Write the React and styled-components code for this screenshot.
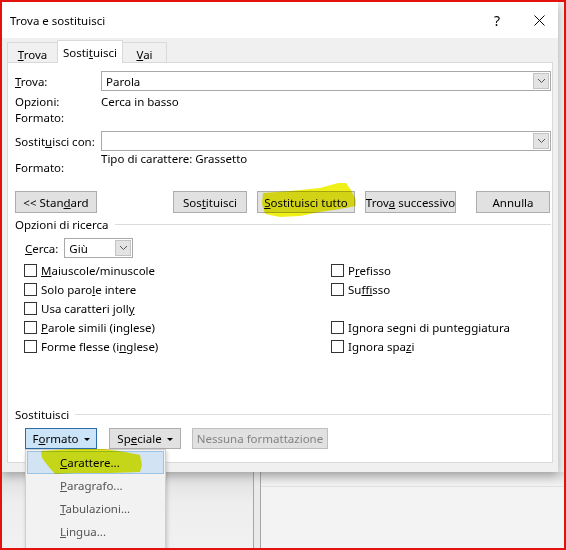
import styled, { createGlobalStyle } from "styled-components";

const GlobalStyle = createGlobalStyle`
  body {
    margin: 0;
    font-family: "Noto Sans", "Liberation Sans", sans-serif;
    font-size: 11.5px;
    color: #000;
  }
`;

const Frame = styled.div`
  width: 566px;
  height: 550px;
  box-sizing: border-box;
  border: 2px solid #e3120c;
  background: #f3f3f3;
  position: relative;
  overflow: hidden;
  display: flex;
  flex-direction: column;
`;

const Dialog = styled.div`
  width: 556px;
  height: 470px;
  flex: none;
  display: flex;
  flex-direction: column;
  background: #f0f0f0;
  box-shadow: 0 3px 10px rgba(0, 0, 0, 0.3);
  position: relative;
  z-index: 1;
`;

const TitleBar = styled.div`
  height: 36px;
  flex: none;
  display: flex;
  align-items: center;
  background: #fff;
  padding-left: 8px;
`;

const Title = styled.div`
  flex: 1;
  font-size: 11.5px;
`;

const TitleButton = styled.div`
  width: ${(p) => p.$w}px;
  height: 36px;
  display: flex;
  align-items: center;
  justify-content: center;
  font-size: 14px;
`;

const Body = styled.div`
  flex: 1;
  display: flex;
  flex-direction: column;
  padding: 2px 5px 9px 5px;
`;

const Tabs = styled.div`
  display: flex;
  align-items: flex-end;
  height: 22px;
  flex: none;
`;

const Tab = styled.div`
  width: ${(p) => p.$w}px;
  height: ${(p) => (p.$active ? 23 : 20)}px;
  box-sizing: border-box;
  border: 1px solid #d9d9d9;
  border-bottom: none;
  background: ${(p) => (p.$active ? "#fff" : "#f0f0f0")};
  display: flex;
  align-items: center;
  justify-content: center;
  margin-bottom: ${(p) => (p.$active ? -1 : 0)}px;
  margin-left: ${(p) => (p.$active ? -1 : 0)}px;
  margin-right: ${(p) => (p.$active ? -1 : 0)}px;
  position: relative;
  z-index: ${(p) => (p.$active ? 2 : 1)};
  padding-top: ${(p) => (p.$active ? 0 : 3)}px;
`;

const Panel = styled.div`
  flex: 1;
  background: #fff;
  border: 1px solid #d9d9d9;
  padding: 8px 1px 0 7px;
  display: flex;
  flex-direction: column;
`;

const FieldGrid = styled.div`
  display: grid;
  grid-template-columns: 86px 1fr;
  align-items: center;
`;

const Label = styled.div`
  height: ${(p) => p.$h || 16}px;
  display: flex;
  align-items: ${(p) => p.$align || "center"};
  margin-top: ${(p) => p.$mt || 0}px;
  white-space: nowrap;
`;

const Value = styled.div`
  height: ${(p) => p.$h || 16}px;
  display: flex;
  align-items: ${(p) => p.$align || "center"};
  margin-top: ${(p) => p.$mt || 0}px;
  white-space: nowrap;
`;

const Combo = styled.div`
  height: 20px;
  width: ${(p) => (p.$w ? `${p.$w}px` : "auto")};
  box-sizing: border-box;
  border: 1px solid #a9a9a9;
  background: #fff;
  display: flex;
  align-items: stretch;
  margin-top: ${(p) => p.$mt || 0}px;
`;

const ComboText = styled.div`
  flex: 1;
  padding-left: 4px;
  display: flex;
  align-items: center;
`;

const ComboArrow = styled.div`
  width: 16px;
  margin: 1px;
  box-sizing: border-box;
  background: #e3e3e3;
  border: 1px solid #c4c4c4;
  display: flex;
  align-items: center;
  justify-content: center;
`;

const ButtonRow = styled.div`
  display: flex;
  align-items: center;
  gap: ${(p) => p.$gap || 10}px;
  margin-top: ${(p) => p.$mt || 0}px;
  padding-left: ${(p) => p.$indent || 0}px;
  padding-right: 1px;
`;

const Spacer = styled.div`
  flex: 1;
`;

const Button = styled.div`
  width: ${(p) => p.$w}px;
  height: ${(p) => p.$h || 22}px;
  box-sizing: border-box;
  flex: none;
  display: flex;
  align-items: center;
  justify-content: center;
  gap: 5px;
  background: ${(p) => (p.$focus ? "#cce4f7" : "#e1e1e1")};
  border: 1px solid ${(p) => (p.$focus ? "#2c6fa6" : p.$disabled ? "#bfbfbf" : "#adadad")};
  color: ${(p) => (p.$disabled ? "#838383" : "#000")};
  margin-left: ${(p) => p.$ml || 0}px;
  white-space: nowrap;
`;

const Caret = styled.span`
  width: 0;
  height: 0;
  border-left: 3px solid transparent;
  border-right: 3px solid transparent;
  border-top: 3px solid #000;
  margin-top: 1px;
`;

const Group = styled.div`
  display: flex;
  align-items: center;
  gap: 6px;
  height: 16px;
  margin-top: ${(p) => p.$mt || 0}px;
  &::after {
    content: "";
    flex: 1;
    height: 1px;
    background: #dcdcdc;
  }
`;

const SearchRow = styled.div`
  display: flex;
  align-items: center;
  gap: 6px;
  padding-left: 10px;
  margin-top: 6px;
`;

const Checks = styled.div`
  display: grid;
  grid-template-columns: 307px 1fr;
  grid-auto-rows: 19px;
  padding-left: 9px;
  margin-top: 3px;
`;

const Check = styled.div`
  display: flex;
  align-items: center;
  gap: 4px;
  white-space: nowrap;
`;

const Box = styled.span`
  width: 13px;
  height: 13px;
  box-sizing: border-box;
  border: 1px solid #333;
  background: #fff;
  flex: none;
`;

const Backdrop = styled.div`
  flex: 1;
  display: flex;
`;

const LeftPane = styled.div`
  width: 251px;
  background: linear-gradient(#dedede, #eeeeee 40%, #f1f1f1);
  border-right: 1px solid #a6a6a6;
`;

const Gutter = styled.div`
  width: 6px;
  background: #eaeaea;
`;

const RightPane = styled.div`
  flex: 1;
  border-left: 1px solid #a6a6a6;
  background: #f3f3f3;
  display: flex;
  flex-direction: column;
`;

const RightTop = styled.div`
  height: 14px;
  background: linear-gradient(#dcdcdc, #f3f3f3);
  border-bottom: 1px solid #e0e0e0;
`;

const Menu = styled.div`
  position: absolute;
  left: 23px;
  top: 447px;
  width: 141px;
  height: 120px;
  box-sizing: border-box;
  background: #f2f2f2;
  border: 1px solid #cfcfcf;
  box-shadow: 1px 2px 4px rgba(0, 0, 0, 0.2);
  padding: 1px 1px;
  z-index: 3;
`;

const MenuItem = styled.div`
  height: 23px;
  box-sizing: border-box;
  display: flex;
  align-items: center;
  padding-left: 32px;
  background: ${(p) => (p.$hot ? "#d2e3f3" : "transparent")};
  border: 1px solid ${(p) => (p.$hot ? "#9cc3e6" : "transparent")};
  color: ${(p) => (p.$hot ? "#000" : "#555")};
`;

const Marker = styled.svg`
  position: absolute;
  left: -2px;
  top: -2px;
  width: 566px;
  height: 550px;
  pointer-events: none;
  mix-blend-mode: multiply;
  z-index: 4;
`;

const Chevron = () => (
  <svg width="9" height="6" viewBox="0 0 9 6">
    <path d="M1 1 L4.5 4.5 L8 1" fill="none" stroke="#555" strokeWidth="1" />
  </svg>
);

const CheckItem = ({ children }) => (
  <Check>
    <Box />
    <span>{children}</span>
  </Check>
);

export default function App() {
  return (
    <>
      <GlobalStyle />
      <Frame>
        <Dialog>
          <TitleBar>
            <Title>Trova e sostituisci</Title>
            <TitleButton $w={46}>?</TitleButton>
            <TitleButton $w={38}>
              <svg width="11" height="11" viewBox="0 0 11 11">
                <path d="M0.5 0.5 L10.5 10.5 M10.5 0.5 L0.5 10.5" stroke="#000" strokeWidth="1" />
              </svg>
            </TitleButton>
          </TitleBar>
          <Body>
            <Tabs>
              <Tab $w={51}>
                <span><u>T</u>rova</span>
              </Tab>
              <Tab $w={66} $active>
                <span>Sosti<u>t</u>uisci</span>
              </Tab>
              <Tab $w={45}>
                <span><u>V</u>ai</span>
              </Tab>
            </Tabs>
            <Panel>
              <FieldGrid>
                <Label $h={20}>
                  <span><u>T</u>rova:</span>
                </Label>
                <Combo>
                  <ComboText>Parola</ComboText>
                  <ComboArrow><Chevron /></ComboArrow>
                </Combo>
                <Label $mt={2}>Opzioni:</Label>
                <Value $mt={2}>Cerca in basso</Value>
                <Label>Formato:</Label>
                <Value />
                <Label $h={20} $mt={6}>
                  <span>Sostit<u>u</u>isci con:</span>
                </Label>
                <Combo $mt={6}>
                  <ComboText />
                  <ComboArrow><Chevron /></ComboArrow>
                </Combo>
                <Label $h={24} $align="flex-end">Formato:</Label>
                <Value $h={24} $align="flex-start">Tipo di carattere: Grassetto</Value>
              </FieldGrid>

              <ButtonRow $mt={16}>
                <Button $w={82}>
                  <span>&lt;&lt; Stan<u>d</u>ard</span>
                </Button>
                <Spacer />
                <Button $w={74}>
                  <span>Sos<u>t</u>ituisci</span>
                </Button>
                <Button $w={98}>
                  <span><u>S</u>ostituisci tutto</span>
                </Button>
                <Button $w={91}>
                  <span>Trov<u>a</u> successivo</span>
                </Button>
                <Button $w={74} $ml={10}>Annulla</Button>
              </ButtonRow>

              <Group $mt={3}>Opzioni di ricerca</Group>
              <SearchRow>
                <span><u>C</u>erca:</span>
                <Combo $w={69}>
                  <ComboText>Giù</ComboText>
                  <ComboArrow><Chevron /></ComboArrow>
                </Combo>
              </SearchRow>

              <Checks>
                <CheckItem><u>M</u>aiuscole/minuscole</CheckItem>
                <CheckItem>P<u>r</u>efisso</CheckItem>
                <CheckItem>Solo paro<u>l</u>e intere</CheckItem>
                <CheckItem>Su<u>f</u>fisso</CheckItem>
                <CheckItem>Usa caratteri joll<u>y</u></CheckItem>
                <div />
                <CheckItem><u>P</u>arole simili (inglese)</CheckItem>
                <CheckItem>I<u>g</u>nora segni di punteggiatura</CheckItem>
                <CheckItem>Forme flesse (i<u>n</u>glese)</CheckItem>
                <CheckItem>Ignora spa<u>z</u>i</CheckItem>
              </Checks>

              <Group $mt={50}>Sostituisci</Group>
              <ButtonRow $mt={6} $indent={10} $gap={12}>
                <Button $w={72} $h={21} $focus>
                  <span>F<u>o</u>rmato</span>
                  <Caret />
                </Button>
                <Button $w={72} $h={21}>
                  <span>Sp<u>e</u>ciale</span>
                  <Caret />
                </Button>
                <Button $w={136} $h={21} $ml={-1} $disabled>
                  Nessuna formattazione
                </Button>
              </ButtonRow>
            </Panel>
          </Body>
        </Dialog>

        <Backdrop>
          <LeftPane />
          <Gutter />
          <RightPane>
            <RightTop />
          </RightPane>
        </Backdrop>

        <Menu>
          <MenuItem $hot><span><u>C</u>arattere...</span></MenuItem>
          <MenuItem><span><u>P</u>aragrafo...</span></MenuItem>
          <MenuItem><span><u>T</u>abulazioni...</span></MenuItem>
          <MenuItem><span><u>L</u>ingua...</span></MenuItem>
        </Menu>

        <Marker viewBox="0 0 566 550">
          <path
            d="M263 193 L290 191 L320 188 L338 183 L346 183 L351 190 L356 200 L356 206 L340 209 L320 212 L300 216 L280 217 L265 214 L262 204 Z"
            fill="#eeee00"
            opacity="0.9"
          />
          <path
            d="M41 451 L70 449 L105 449 L125 452 L140 455 L142 465 L140 472 L110 473 L75 473 L55 474 L48 466 L42 458 Z"
            fill="#eeee00"
            opacity="0.9"
          />
        </Marker>
      </Frame>
    </>
  );
}
